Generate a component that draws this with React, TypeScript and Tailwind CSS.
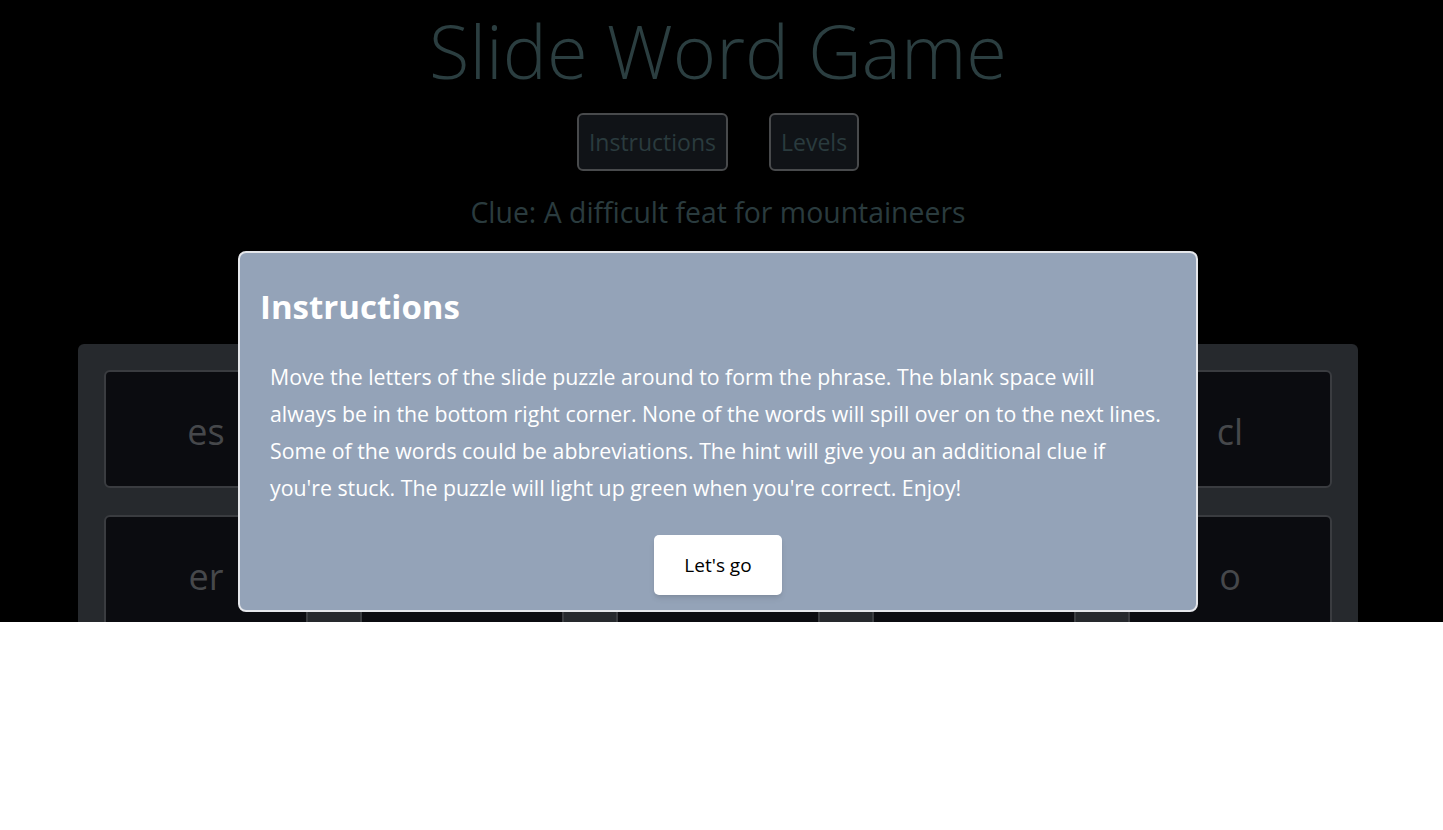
import { useState } from "react";

// tiles hidden behind the modal are left blank
const rows: string[][] = [
  ["es", "", "", "", "cl"],
  ["er", "", "", "", "o"],
  ["", "", "", "", ""],
];

function Tile({ text }: { text: string }) {
  return (
    <div className="h-[118px] pt-[6px] rounded-[6px] border-2 border-[#3a3c40] bg-[#0b0c10] flex items-center justify-center text-[36px] text-[#46484b]">
      {text}
    </div>
  );
}

export default function App() {
  const [showModal, setShowModal] = useState(true);

  return (
    <div className="w-full h-[622px] bg-black overflow-hidden relative font-['Open_Sans',sans-serif]">
      <div className="w-[1436px] flex flex-col items-center">
        <h1 className="mt-[3px] text-[74px] leading-[96px] font-light text-[#2b3e40]">Slide Word Game</h1>
        <div className="mt-[14px] flex gap-[41px]">
          <button className="h-[58px] px-[10px] rounded-[6px] border-2 border-[#484a4c] bg-[#101317] text-[23px] text-[#2a3b3e]">
            Instructions
          </button>
          <button className="h-[58px] px-[10px] rounded-[6px] border-2 border-[#484a4c] bg-[#101317] text-[23px] text-[#2a3b3e]">
            Levels
          </button>
        </div>
        <p className="mt-[21px] text-[28.4px] leading-[40px] text-[#2a3b3e]">Clue: A difficult feat for mountaineers</p>
        <div className="mt-[112px] w-[1280px] rounded-[6px] bg-[#26292d] p-[26px] flex flex-col gap-[27px]">
          {rows.map((row, i) => (
            <div key={i} className="grid grid-cols-5 gap-[52px]">
              {row.map((t, j) => (
                <Tile key={j} text={t} />
              ))}
            </div>
          ))}
        </div>
      </div>

      {showModal && (
        <div className="absolute left-[238px] top-[251px] w-[960px] h-[361px] rounded-[8px] border-2 border-[#e5e7eb] bg-[#94a3b8] text-white flex flex-col">
          <h2 className="mt-[30px] ml-[20px] text-[33px] leading-[48px] font-bold">Instructions</h2>
          <p className="mt-[27px] ml-[30px] text-[21.3px] leading-[37px] whitespace-nowrap">
            Move the letters of the slide puzzle around to form the phrase. The blank space will
            <br />
            always be in the bottom right corner. None of the words will spill over on to the next lines.
            <br />
            Some of the words could be abbreviations. The hint will give you an additional clue if
            <br />
            you're stuck. The puzzle will light up green when you're correct. Enjoy!
          </p>
          <div className="mt-[29px] flex justify-center">
            <button
              onClick={() => setShowModal(false)}
              className="w-[128px] h-[60px] rounded-[5px] bg-white text-black text-[19px] shadow-md"
            >
              Let's go
            </button>
          </div>
        </div>
      )}
    </div>
  );
}
